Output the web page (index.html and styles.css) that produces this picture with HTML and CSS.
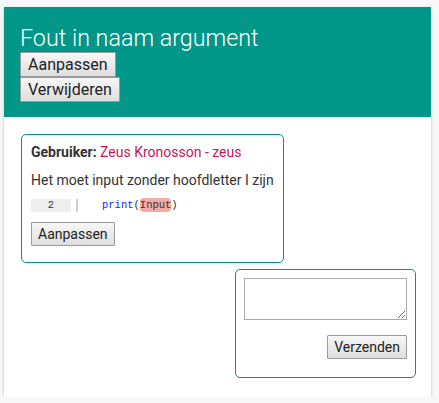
FILE: index.html
```html
<!DOCTYPE html>
<html>
<head>
<meta charset="utf-8">
<link rel="stylesheet" href="styles.css">
</head>
<body>
<div class="card">
  <div class="header">
    <h1 class="title">Fout in naam argument</h1>
    <button class="btn btn-lg">Aanpassen</button>
    <button class="btn btn-lg">Verwijderen</button>
  </div>
  <div class="content">
    <div class="box comment">
      <p class="author"><b>Gebruiker:</b> <span class="name">Zeus Kronosson - zeus</span></p>
      <p class="message">Het moet input zonder hoofdletter I zijn</p>
      <div class="code-row">
        <span class="lineno">2</span>
        <span class="sep"></span>
        <code class="code"><span class="fn">print</span>(<span class="mark">Input</span>)</code>
      </div>
      <button class="btn btn-sm">Aanpassen</button>
    </div>
    <div class="box reply">
      <textarea class="input"></textarea>
      <div class="actions">
        <button class="btn btn-sm">Verzenden</button>
      </div>
    </div>
  </div>
</div>
</body>
</html>
```
FILE: styles.css
```css
* { box-sizing: border-box; }
body {
  margin: 0;
  padding: 7px 8px 0 4px;
  background: #f8f8f8;
  font-family: Roboto, "Liberation Sans", sans-serif;
}
.card {
  width: 427px;
  background: #fff;
  box-shadow: 0 1px 3px rgba(0,0,0,0.22);
}
.header {
  background: #009688;
  color: #fff;
  padding: 17px 16px 15px 16px;
}
.title {
  margin: 0;
  font-size: 23.3px;
  font-weight: 300;
  line-height: 28px;
}
.btn {
  font-family: Roboto, "Liberation Sans", sans-serif;
  color: #222;
  background: linear-gradient(#f7f7f7, #dedede);
  border: 1px solid #9a9a9a;
  border-radius: 1px;
  margin: 0;
}
.btn-lg {
  display: block;
  font-size: 16px;
  line-height: 19px;
  padding: 2px 7px;
}
.btn-sm {
  font-size: 14px;
  line-height: 18px;
  padding: 2px 6px;
}
.content {
  padding: 17px 15px 19px 17px;
}
.box {
  border: 1px solid #009688;
  border-radius: 5px;
}
.comment {
  width: 263px;
  padding: 9px 9px 16px 9px;
  margin-bottom: 6px;
  color: #333;
  font-size: 14px;
}
.author, .message {
  margin: 0 0 12px 0;
  line-height: 16px;
}
.message { margin-bottom: 10px; }
.name { color: #c2185b; }
.code-row {
  display: flex;
  align-items: center;
  height: 14px;
  margin-bottom: 10px;
  font-family: "Liberation Mono", "DejaVu Sans Mono", monospace;
  font-size: 10.5px;
}
.lineno {
  width: 40px;
  height: 13px;
  line-height: 13px;
  background: #eeeeee;
  text-align: center;
  color: #333;
}
.sep {
  width: 2px;
  height: 13px;
  background: #d0d0d0;
  margin-left: 5px;
}
.code {
  margin-left: 24px;
  font-family: inherit;
  color: #333;
}
.fn { color: #1a1aff; }
.mark {
  background: #f3aba6;
  border-radius: 4px;
  padding: 1px 0;
}
.reply {
  width: 181px;
  margin-left: auto;
  padding: 8px 8px 18px 8px;
}
.input {
  display: block;
  width: 100%;
  height: 42px;
  margin: 0 0 15px 0;
  border: 1px solid #a9a9a9;
  font-family: "Liberation Mono", monospace;
}
.actions {
  display: flex;
  justify-content: flex-end;
}
```
